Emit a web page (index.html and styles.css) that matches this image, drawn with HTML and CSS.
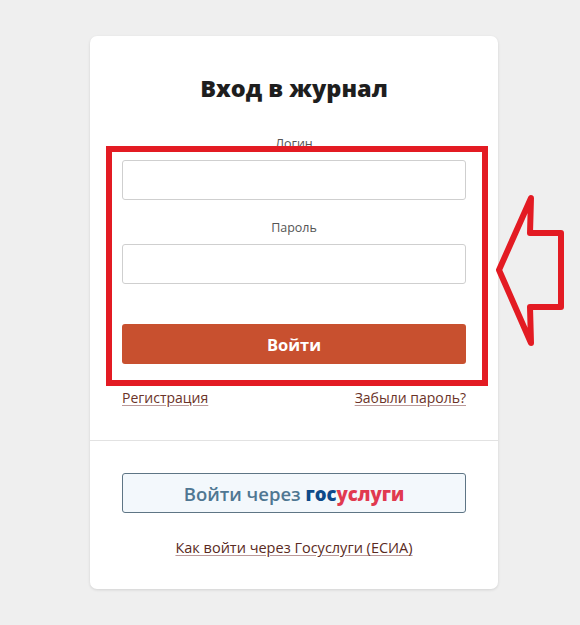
FILE: index.html
```html
<!DOCTYPE html>
<html lang="ru">
<head>
<meta charset="utf-8">
<title>Вход в журнал</title>
<link rel="stylesheet" href="styles.css">
</head>
<body>
<div class="page">
  <div class="card">
    <h1 class="title">Вход в журнал</h1>
    <div class="form">
      <label class="label">Логин</label>
      <input class="input" type="text">
      <label class="label label-gap">Пароль</label>
      <input class="input" type="password">
      <button class="btn-login">Войти</button>
      <div class="links">
        <a class="link" href="#">Регистрация</a>
        <a class="link" href="#">Забыли пароль?</a>
      </div>
    </div>
    <div class="divider"></div>
    <div class="esia">
      <button class="btn-gos">Войти через <span class="gos">гос</span><span class="usl">услуги</span></button>
      <a class="link link-esia" href="#">Как войти через Госуслуги (ЕСИА)</a>
    </div>
    <div class="highlight"></div>
  </div>
  <svg class="arrow" width="72" height="158" viewBox="0 0 72 158">
    <polygon points="4,78 36,6 35,41 66,41 66,115 35,115 36,151" fill="none" stroke="#e31b23" stroke-width="6" stroke-linejoin="round"/>
  </svg>
</div>
</body>
</html>
```
FILE: styles.css
```css
* { box-sizing: border-box; }
html, body { margin: 0; padding: 0; }
body {
  background: #efefef;
  font-family: "Open Sans", "Noto Sans", sans-serif;
  color: #222;
  width: 580px;
  height: 625px;
  overflow: hidden;
}
.page {
  position: relative;
  padding-top: 36px;
  padding-left: 90px;
}
.card {
  position: relative;
  width: 408px;
  height: 553px;
  background: #fff;
  border-radius: 7px;
  box-shadow: 0 1px 3px rgba(0,0,0,0.12);
  display: flex;
  flex-direction: column;
}
.title {
  margin: 37px 0 0;
  font-size: 23.5px;
  line-height: 30px;
  font-weight: 800;
  text-align: center;
  color: #1e1e1e;
}
.form {
  display: flex;
  flex-direction: column;
  padding: 0 32px;
  margin-top: 32px;
}
.label {
  font-size: 12.5px;
  line-height: 18px;
  color: #555;
  text-align: center;
}
.label-gap { margin-top: 19px; }
.input {
  margin-top: 7px;
  height: 40px;
  border: 1px solid #cfcfcf;
  border-radius: 3px;
  background: #fff;
  font-family: inherit;
}
.btn-login {
  margin-top: 40px;
  height: 40px;
  border: none;
  border-radius: 3px;
  background: #c8502f;
  color: #fff;
  font-family: inherit;
  font-weight: 700;
  font-size: 16.5px;
}
.links {
  margin-top: 24px;
  display: flex;
  justify-content: space-between;
}
.link {
  font-size: 14px;
  line-height: 20px;
  color: #6b3328;
  text-decoration: underline;
  text-decoration-color: #b99;
  text-underline-offset: 2px;
}
.divider {
  margin-top: 32px;
  height: 1px;
  background: #e2e2e2;
}
.esia {
  display: flex;
  flex-direction: column;
  align-items: center;
  padding: 0 32px;
}
.btn-gos {
  margin-top: 32px;
  width: 100%;
  height: 40px;
  border: 1px solid #5e7585;
  border-radius: 3px;
  background: #f3f8fc;
  color: #4f7792;
  font-family: inherit;
  font-size: 18.5px;
  font-weight: 600;
}
.gos { color: #0e4a89; font-weight: 800; }
.usl { color: #e13a50; font-weight: 800; }
.link-esia {
  margin-top: 25px;
  font-size: 14.5px;
  color: #5a2a22;
}
.highlight {
  position: absolute;
  left: 16px;
  top: 110px;
  width: 382px;
  height: 240px;
  border: 6px solid #e31b23;
  pointer-events: none;
}
.arrow {
  position: absolute;
  left: 495px;
  top: 192px;
}
```
